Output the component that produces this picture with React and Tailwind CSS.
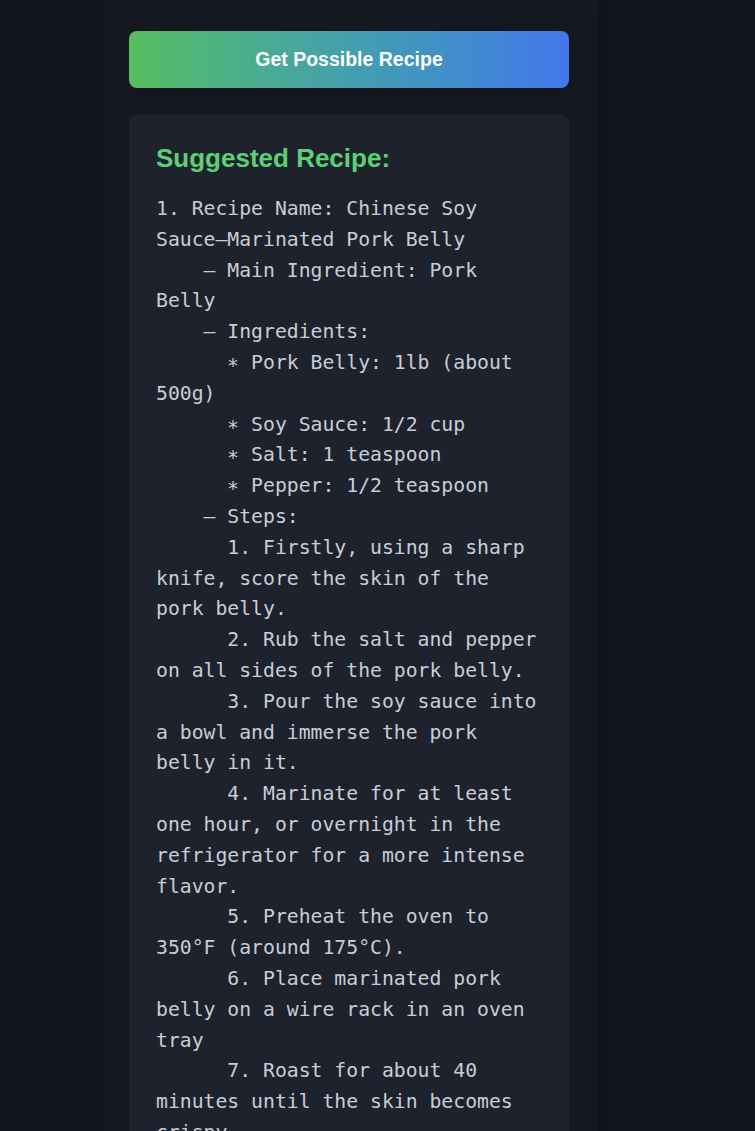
import React from "react";

const recipeText = `1. Recipe Name: Chinese Soy Sauce–Marinated Pork Belly
    – Main Ingredient: Pork Belly
    – Ingredients:
      ∗ Pork Belly: 1lb (about 500g)
      ∗ Soy Sauce: 1/2 cup
      ∗ Salt: 1 teaspoon
      ∗ Pepper: 1/2 teaspoon
    – Steps:
      1. Firstly, using a sharp knife, score the skin of the pork belly.
      2. Rub the salt and pepper on all sides of the pork belly.
      3. Pour the soy sauce into a bowl and immerse the pork belly in it.
      4. Marinate for at least one hour, or overnight in the refrigerator for a more intense flavor.
      5. Preheat the oven to 350°F (around 175°C).
      6. Place marinated pork belly on a wire rack in an oven tray
      7. Roast for about 40 minutes until the skin becomes crispy.`;

// 레시피 결과 화면
export default function App() {
  return (
    <div className="min-h-[1131px] bg-[#13161e] overflow-hidden">
      <div className="ml-[103px] w-[495px] min-h-[1131px] bg-[#151821] shadow-[8px_0_20px_rgba(0,0,0,0.2)] pl-[26px] pt-[31px]">
        <div className="w-[440px]">
          {/* 버튼 */}
          <button className="w-full h-[57px] rounded-[8px] bg-gradient-to-r from-[#57bd5d] to-[#4476ea] text-white font-bold text-[19.5px] font-['Liberation_Sans',Arial,sans-serif] shadow-md">
            Get Possible Recipe
          </button>

          {/* 결과 카드 */}
          <div className="mt-[27px] rounded-[8px] bg-[#1e222d] px-[27px] pt-[27px] pb-8">
            <h2 className="text-[26px] leading-[32px] font-bold text-[#5dcf75] font-['Liberation_Sans',Arial,sans-serif]">
              Suggested Recipe:
            </h2>
            <pre className="mt-[20px] whitespace-pre-wrap break-words font-['DejaVu_Sans_Mono',monospace] text-[19.75px] leading-[30.8px] text-[#c9cdd4]">
              {recipeText}
            </pre>
          </div>
        </div>
      </div>
    </div>
  );
}
